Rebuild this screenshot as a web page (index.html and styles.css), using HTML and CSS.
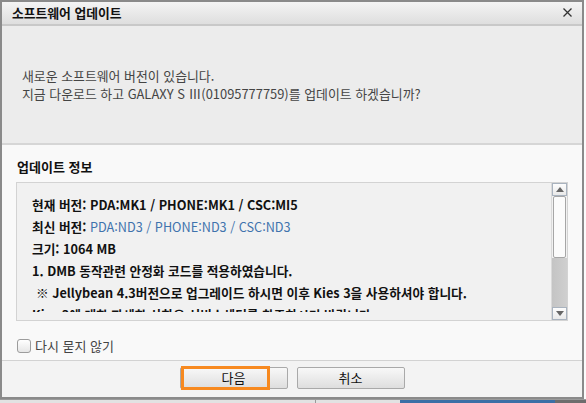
FILE: index.html
```html
<!DOCTYPE html>
<html lang="ko">
<head>
  <meta charset="UTF-8" />
  <title>소프트웨어 업데이트</title>
  <link rel="stylesheet" href="styles.css">
</head>
<body>
  <div class="dialog">
    <div class="titlebar">
      <span class="title">소프트웨어 업데이트</span>
      <span class="close">
        <svg width="9" height="9" viewBox="0 0 9 9"><path d="M0.5 0.5 L8.5 8.5 M8.5 0.5 L0.5 8.5" stroke="#333" stroke-width="1.3" fill="none"/></svg>
      </span>
    </div>

    <div class="notice">
      <p>새로운 소프트웨어 버전이 있습니다.<br>지금 다운로드 하고 GALAXY S Ⅲ(01095777759)를 업데이트 하겠습니까?</p>
    </div>

    <div class="info">
      <h2>업데이트 정보</h2>
      <div class="info-box">
        <div class="info-text">
          <div class="line">현재 버전: PDA:MK1 / PHONE:MK1 / CSC:MI5</div>
          <div class="line">최신 버전: <span class="new">PDA:ND3 / PHONE:ND3 / CSC:ND3</span></div>
          <div class="line">크기: 1064 MB</div>
          <div class="line">1. DMB 동작관련 안정화 코드를 적용하였습니다.</div>
          <div class="line note">※ Jellybean 4.3버전으로 업그레이드 하시면 이후 Kies 3을 사용하셔야 합니다.</div>
          <div class="line">Kies 3에 대한 자세한 사항은 서비스센터를 참조하시기 바랍니다.</div>
        </div>
        <div class="scrollbar">
          <span class="sb-btn"><span class="arrow up"></span></span>
          <span class="sb-thumb"></span>
          <span class="sb-track"></span>
          <span class="sb-btn"><span class="arrow down"></span></span>
        </div>
      </div>
      <label class="dont-ask"><span class="check"></span>다시 묻지 않기</label>
    </div>

    <div class="footer">
      <button class="btn next">다음<span class="focus-mark"></span></button>
      <button class="btn">취소</button>
    </div>
  </div>
  <div class="behind">
    <span class="seg a"></span>
    <span class="seg b"></span>
    <span class="seg blue"></span>
    <span class="seg c"></span>
  </div>
</body>
</html>
```

FILE: styles.css
```css
html, body {
  margin: 0;
  padding: 0;
}
body {
  width: 586px;
  height: 403px;
  overflow: hidden;
  background: #fbfbfb;
  font-family: "Noto Sans CJK KR", "Noto Sans", sans-serif;
  font-size: 13px;
  color: #222;
}
.dialog {
  width: 584px;
  height: 399px;
  box-sizing: border-box;
  border: 2px solid #8a8a8a;
  display: flex;
  flex-direction: column;
  background: #f3f3f3;
}
.titlebar {
  height: 22px;
  flex: none;
  border-bottom: 2px solid #c8c8c8;
  background: linear-gradient(#f4f4f4, #dedede);
  display: flex;
  align-items: center;
  justify-content: space-between;
  padding: 0 10px 0 10px;
}
.title {
  font-weight: bold;
  font-size: 12.8px;
  color: #111;
  line-height: 22px;
}
.close {
  display: flex;
  margin-top: -1px;
}
.notice {
  height: 119px;
  flex: none;
  box-sizing: border-box;
  background: #ececec;
  border-bottom: 2px solid #d6d6d6;
  padding: 41px 0 0 20px;
}
.notice p {
  margin: 0;
  font-size: 12.9px;
  line-height: 18px;
  color: #444;
}
.info {
  height: 215px;
  flex: none;
  box-sizing: border-box;
  background: #f9f9f9;
  padding: 13px 14px 0 14px;
}
.info h2 {
  margin: 0 0 6px 1px;
  font-size: 13px;
  line-height: 18px;
  font-weight: bold;
  color: #111;
}
.info-box {
  height: 139px;
  box-sizing: border-box;
  border: 1px solid #d3d3d3;
  background: #f1f1f1;
  display: flex;
}
.info-text {
  flex: 1;
  height: 129px;
  overflow: hidden;
  box-sizing: border-box;
  padding: 11px 0 0 15px;
  font-size: 12.7px;
  font-weight: bold;
  color: #111;
}
.line {
  line-height: 22px;
  white-space: nowrap;
}
.line.note {
  padding-left: 4px;
}
.new {
  color: #3f73ad;
  font-weight: normal;
}
.scrollbar {
  width: 15px;
  display: flex;
  flex-direction: column;
  border-left: 1px solid #dadada;
}
.sb-btn {
  height: 13px;
  box-sizing: border-box;
  border: 1px solid #a9b3bf;
  background: linear-gradient(#fdfdfd, #e9e9e9);
  display: flex;
  align-items: center;
  justify-content: center;
}
.arrow {
  width: 0;
  height: 0;
  border-left: 4px solid transparent;
  border-right: 4px solid transparent;
}
.arrow.up {
  border-bottom: 5px solid #666;
}
.arrow.down {
  border-top: 5px solid #666;
}
.sb-thumb {
  height: 62px;
  box-sizing: border-box;
  border: 1px solid #a6a6a6;
  border-radius: 2px;
  background: #fbfbfb;
  margin: 0 1px;
}
.sb-track {
  flex: 1;
  background: linear-gradient(90deg, #c4c4c4, #cfcfcf);
}
.dont-ask {
  display: flex;
  align-items: center;
  margin: 17px 0 0 1px;
  color: #444;
  line-height: 16px;
}
.check {
  width: 14px;
  height: 14px;
  box-sizing: border-box;
  border: 1px solid #9c9c9c;
  border-radius: 3px;
  background: linear-gradient(#ffffff, #e6e6e6);
  margin-right: 4px;
}
.footer {
  flex: 1;
  border-top: 1px solid #d2d2d2;
  background: #f3f3f3;
  display: flex;
  justify-content: center;
  gap: 9px;
  padding-top: 6px;
}
.btn {
  position: relative;
  width: 108px;
  height: 22px;
  border: 1px solid #a9a9a9;
  border-radius: 2px;
  background: linear-gradient(#f8f8f8, #dedede);
  font-family: inherit;
  font-size: 13px;
  color: #111;
  padding: 0;
  line-height: 20px;
}
.focus-mark {
  position: absolute;
  left: 0;
  top: -2px;
  width: 89px;
  height: 24px;
  box-sizing: border-box;
  border: 3px solid #f7891f;
}
.behind {
  display: flex;
  height: 4px;
  background: #e2e2e2;
  border-top: 1px solid #9a9a9a;
}
.seg {
  height: 100%;
}
.seg.a {
  width: 315px;
  border-right: 1px solid #999;
}
.seg.b {
  width: 84px;
}
.seg.blue {
  width: 155px;
  background: #3b6fa6;
}
.seg.c {
  flex: 1;
  background: #6d6d6d;
}
```
